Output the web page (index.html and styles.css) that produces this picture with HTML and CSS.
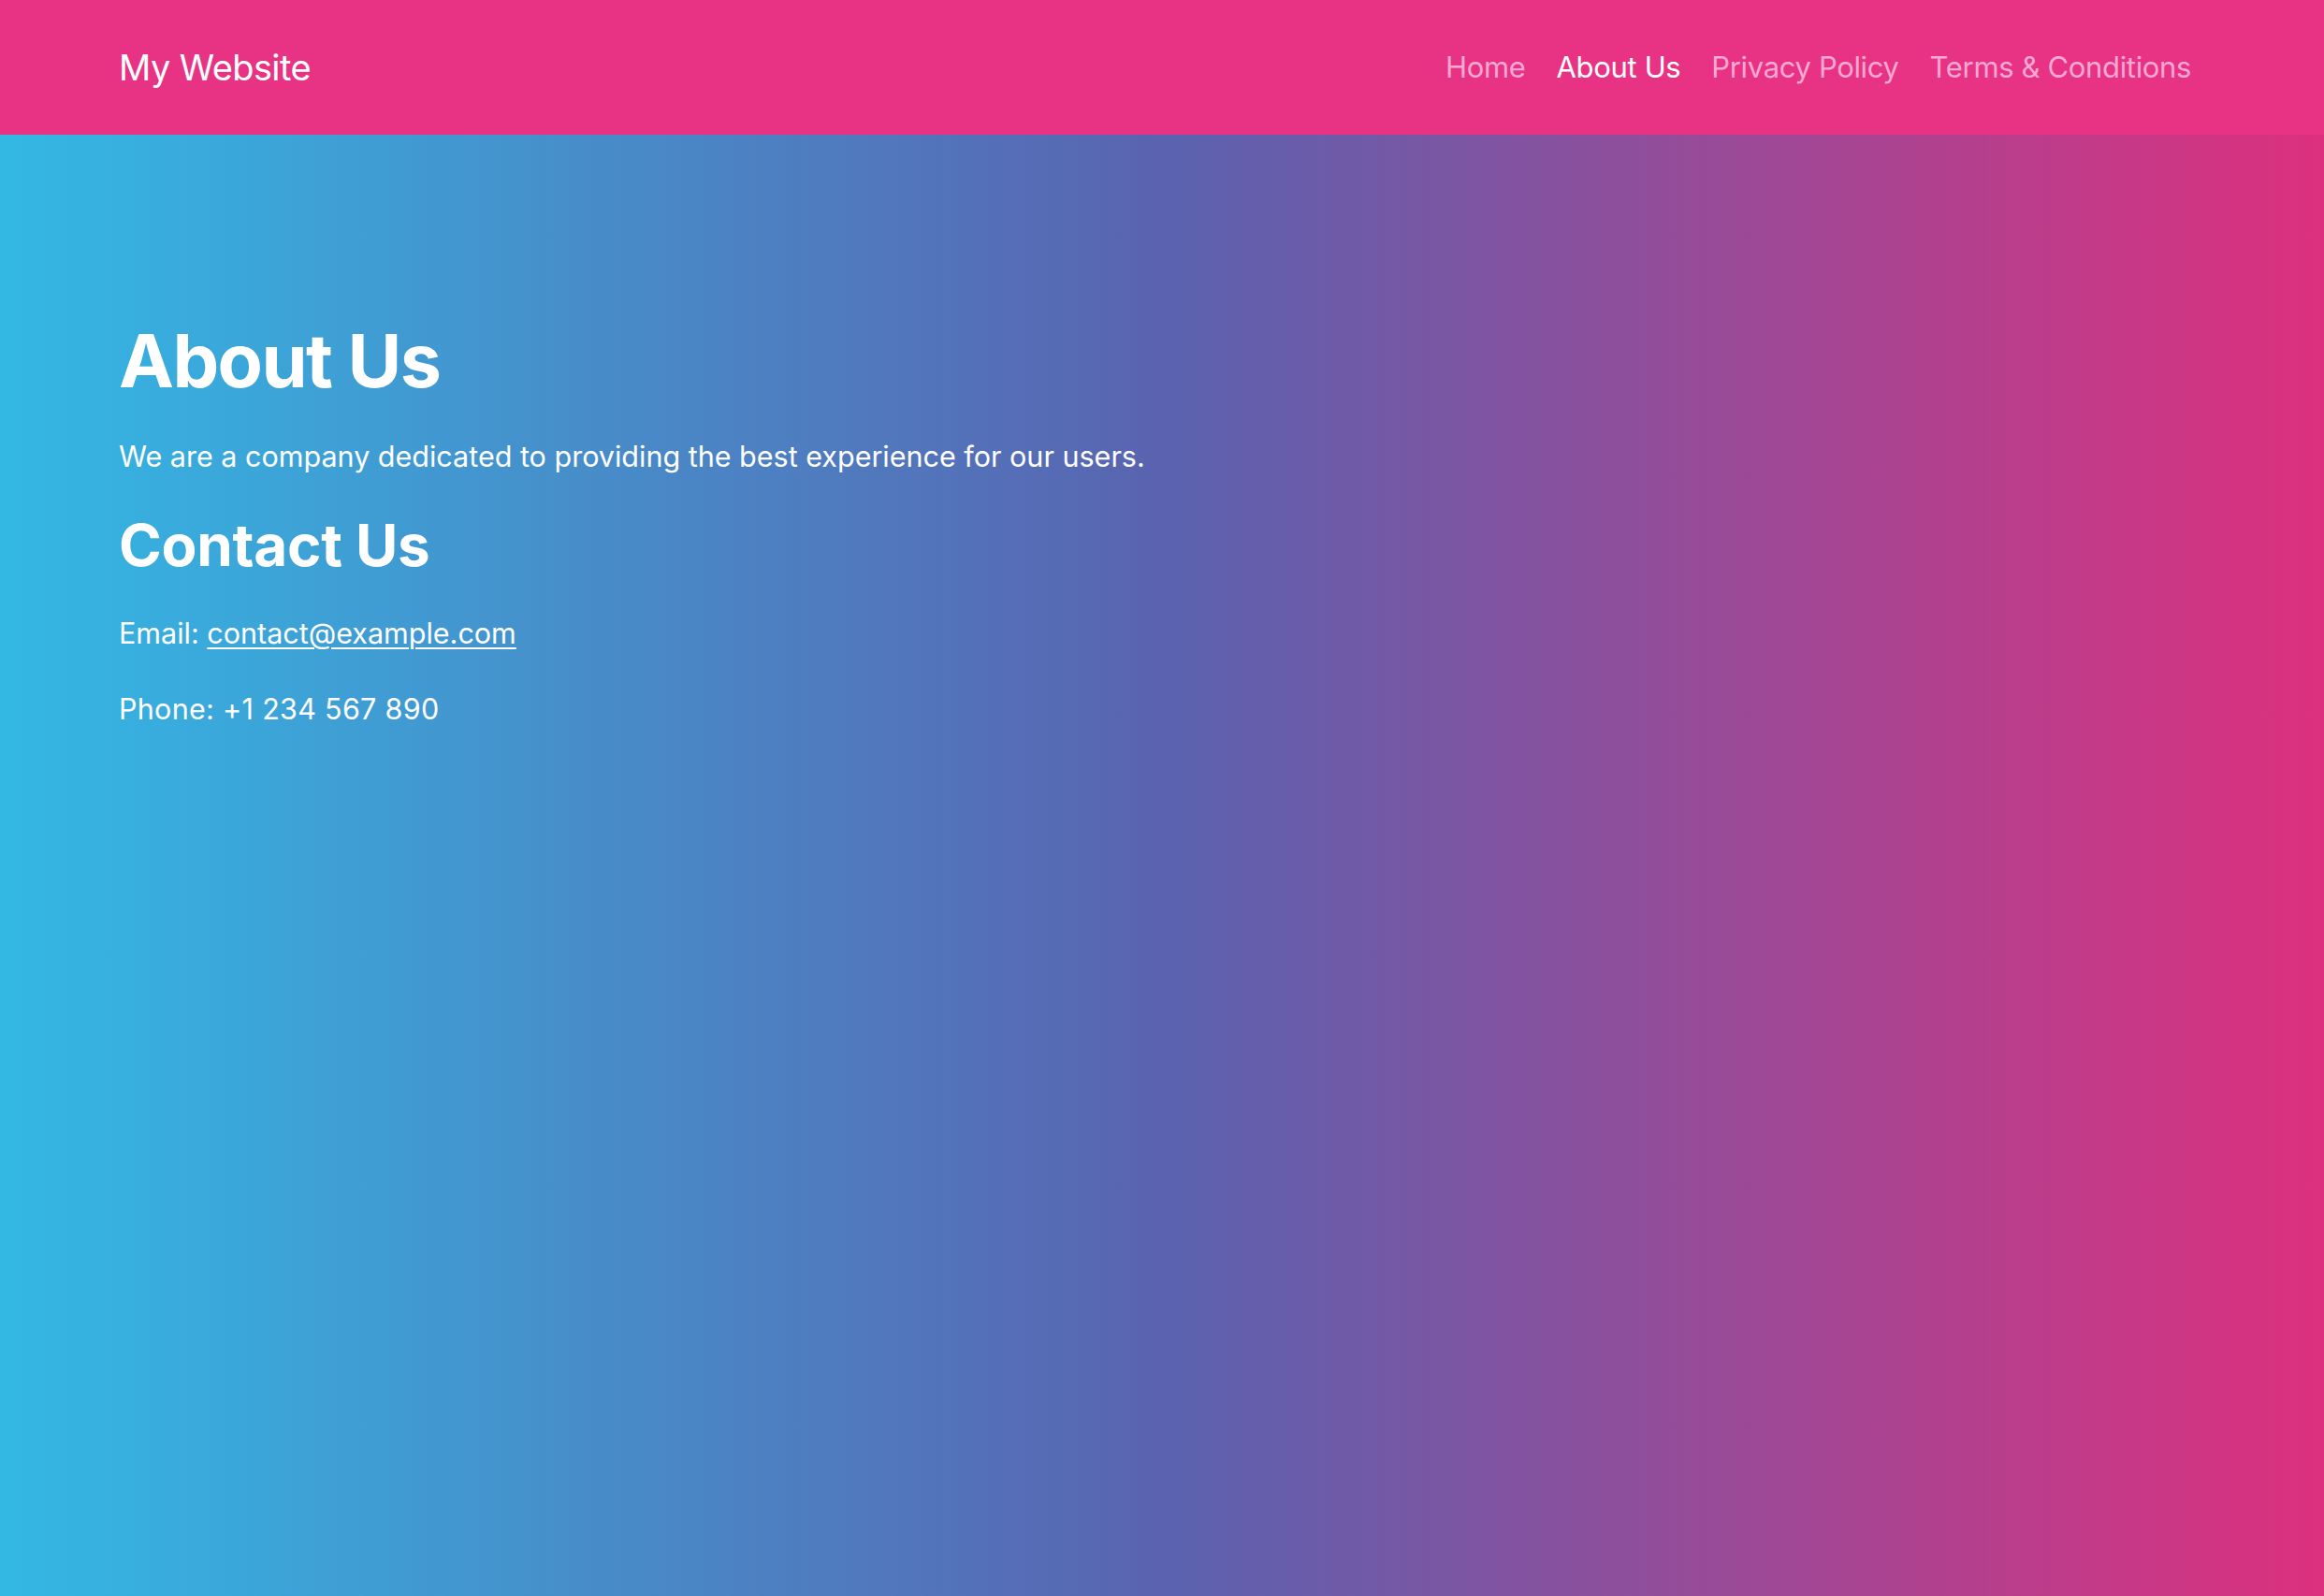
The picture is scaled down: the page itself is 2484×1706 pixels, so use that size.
FILE: index.html
```html
<!DOCTYPE html>
<html lang="en">
<head>
<meta charset="utf-8">
<title>About Us - My Website</title>
<link rel="stylesheet" href="styles.css">
</head>
<body>
<header class="navbar">
  <a class="brand" href="#">My Website</a>
  <nav class="nav">
    <a class="nav-link" href="#">Home</a>
    <a class="nav-link active" href="#">About Us</a>
    <a class="nav-link" href="#">Privacy Policy</a>
    <a class="nav-link" href="#">Terms &amp; Conditions</a>
  </nav>
</header>
<main class="content">
  <h1 class="title">About Us</h1>
  <p class="text">We are a company dedicated to providing the best experience for our users.</p>
  <h2 class="subtitle">Contact Us</h2>
  <p class="text email">Email: <a class="mail" href="#">contact@example.com</a></p>
  <p class="text phone">Phone: +1 234 567 890</p>
</main>
</body>
</html>
```
FILE: styles.css
```css
html, body {
  margin: 0;
  padding: 0;
  height: 100%;
}
body {
  font-family: Inter, "Noto Sans", "Liberation Sans", sans-serif;
  color: #ffffff;
  background: linear-gradient(to right, #33b8e4 0%, #5a63b0 50%, #dc307e 100%);
  min-height: 100vh;
}
.navbar {
  height: 144px;
  box-sizing: border-box;
  background: #e83283;
  display: flex;
  align-items: center;
  justify-content: space-between;
  padding: 0 142px 0 127px;
}
.brand {
  color: #ffffff;
  text-decoration: none;
  font-size: 38px;
  letter-spacing: -0.6px;
  line-height: 48px;
}
.nav {
  display: flex;
  gap: 33px;
}
.nav-link {
  color: #f9a8d4;
  text-decoration: none;
  font-size: 31px;
  letter-spacing: -0.35px;
  line-height: 48px;
}
.nav-link.active {
  color: #ffffff;
}
.content {
  padding: 193px 127px 0;
  display: flex;
  flex-direction: column;
  align-items: flex-start;
}
.title {
  margin: 0;
  font-size: 79px;
  letter-spacing: -1.6px;
  line-height: 96px;
  font-weight: 700;
}
.subtitle {
  margin: 35px 0 0;
  font-size: 62px;
  letter-spacing: -0.3px;
  line-height: 77px;
  font-weight: 700;
}
.text {
  margin: 34px 0 0;
  font-size: 30.5px;
  line-height: 42px;
}
.text.email {
  margin-top: 35px;
}
.text.phone {
  margin-top: 39px;
  letter-spacing: 0.3px;
}
.mail {
  color: #ffffff;
  text-decoration: underline;
  text-underline-offset: 4px;
  text-decoration-thickness: 2px;
}
```
